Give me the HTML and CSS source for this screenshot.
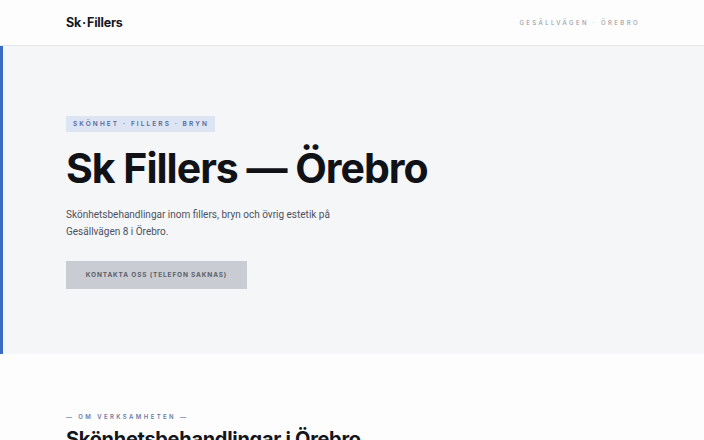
FILE: index.html
```html
<!DOCTYPE html>
<html lang="sv">
<head>
    <meta charset="UTF-8">
    <meta name="viewport" content="width=device-width, initial-scale=1.0">
    <title>Sk Fillers — Örebro</title>
    <link rel="stylesheet" href="styles.css">
</head>
<body>

    <header class="topbar">
        <div class="wrap topbar-inner">
            <div class="logo">Sk<span class="dot">·</span>Fillers</div>
            <div class="location">Gesällvägen · Örebro</div>
        </div>
    </header>

    <section class="hero">
        <div class="wrap">
            <div class="tag">Skönhet · Fillers · Bryn</div>
            <h1>Sk Fillers — Örebro</h1>
            <p class="lead">Skönhetsbehandlingar inom fillers, bryn och övrig estetik på Gesällvägen 8 i Örebro.</p>
            <button class="btn" disabled>Kontakta oss (telefon saknas)</button>
        </div>
    </section>

    <section class="about">
        <div class="wrap">
            <div class="eyebrow">— Om verksamheten —</div>
            <h2>Skönhetsbehandlingar i Örebro</h2>
        </div>
    </section>

</body>
</html>
```

FILE: styles.css
```css
body {
    font-family: Roboto, Arial, sans-serif;
    margin: 0;
    padding: 0;
    background-color: #fdfdfe;
    color: #14161c;
    overflow: hidden;
}
.wrap {
    max-width: 572px;
    margin: 0 auto;
}
.topbar {
    background-color: #fdfdfe;
    border-bottom: 1px solid #e4e6ea;
}
.topbar-inner {
    display: flex;
    justify-content: space-between;
    align-items: center;
    height: 45px;
}
.logo {
    font-family: Inter, sans-serif;
    font-weight: 700;
    font-size: 12.5px;
    letter-spacing: -0.2px;
    color: #15171d;
}
.logo .dot {
    margin: 0 1px;
}
.location {
    font-family: Inter, sans-serif;
    font-size: 6px;
    font-weight: 500;
    letter-spacing: 2.4px;
    text-transform: uppercase;
    color: #9a9ea8;
    margin-right: -2px;
}
.hero {
    background-color: #f5f6f8;
    border-left: 3px solid #3a6cc4;
    padding: 65px 0 65px;
}
.hero .wrap {
    padding-right: 3px;
}
.tag {
    display: inline-block;
    background-color: #dde4f4;
    color: #55679a;
    font-family: Inter, sans-serif;
    font-size: 6.5px;
    font-weight: 600;
    letter-spacing: 2.1px;
    text-transform: uppercase;
    padding: 4px 6px 4px 7px;
    line-height: 8px;
}
h1 {
    font-family: Inter, sans-serif;
    font-weight: 700;
    font-size: 41px;
    letter-spacing: -1px;
    line-height: 1.1;
    margin: 14px 0 15px;
    color: #101218;
}
.lead {
    font-size: 10px;
    line-height: 17px;
    color: #4d525e;
    max-width: 300px;
    margin: 0 0 21px;
}
.btn {
    background-color: #c9ccd3;
    color: #5a5f6b;
    border: none;
    font-family: Inter, sans-serif;
    font-size: 6.5px;
    font-weight: 700;
    letter-spacing: 0.85px;
    text-transform: uppercase;
    white-space: nowrap;
    padding: 0;
    height: 28px;
    width: 181px;
}
.about {
    padding: 59px 0 0;
}
.eyebrow {
    font-family: Inter, sans-serif;
    font-size: 6px;
    font-weight: 600;
    letter-spacing: 2.4px;
    text-transform: uppercase;
    color: #6c7aa4;
}
h2 {
    font-family: Inter, sans-serif;
    font-weight: 700;
    font-size: 20px;
    letter-spacing: -0.3px;
    margin: 7px 0 0;
}
```
